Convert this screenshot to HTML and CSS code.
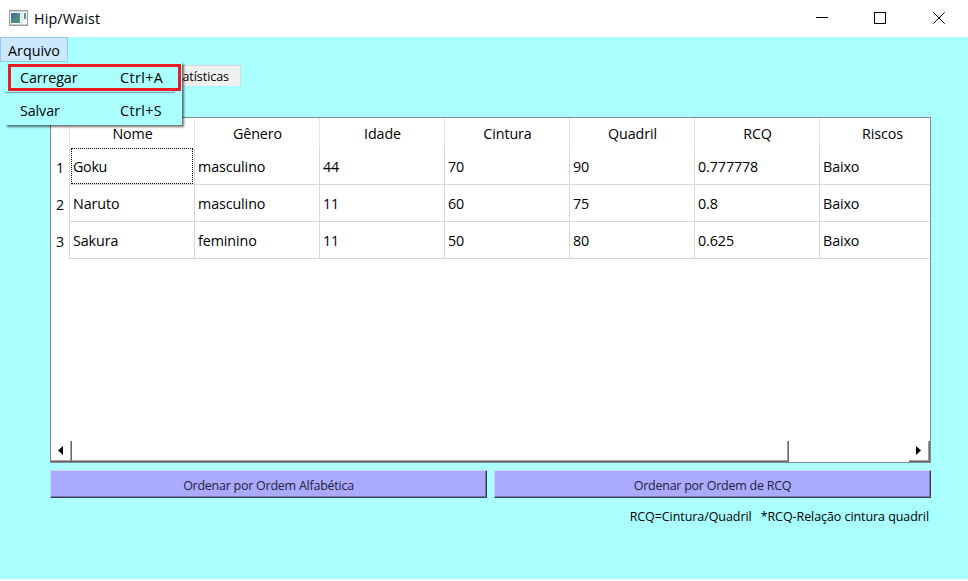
FILE: index.html
```html
<!DOCTYPE html>
<html lang="pt">
<head>
<meta charset="utf-8">
<title>Hip/Waist</title>
<link rel="stylesheet" href="styles.css">
</head>
<body>
<div class="window">
  <header class="titlebar">
    <svg class="app-icon" width="19" height="16" viewBox="0 0 19 16">
      <defs><linearGradient id="g" x1="0" y1="0" x2="1" y2="1"><stop offset="0" stop-color="#3c69a6"/><stop offset="1" stop-color="#4fa66d"/></linearGradient></defs>
      <rect x=".5" y=".5" width="18" height="15" fill="#f7f7f7" stroke="#989ca1"/>
      <rect x="1" y="1" width="17" height="1" fill="#d4d7da"/>
      <rect x="2" y="3" width="9" height="10" fill="url(#g)"/>
      <rect x="12" y="3" width="2" height="10" fill="#e4e4e4"/>
      <rect x="15" y="3" width="2" height="6" fill="#5b9a91"/>
      <rect x="1" y="14" width="17" height="1" fill="#ccc"/>
    </svg>
    <h1 class="title">Hip/Waist</h1>
    <svg class="controls" width="130" height="14" viewBox="0 0 130 14" fill="none" stroke="#000">
      <path d="M0 6.500h12M58.500 1.500h11v11h-11z" shape-rendering="crispEdges"/>
      <path d="M117.300 1.300l11.400 11.400M128.700 1.300l-11.400 11.400"/>
    </svg>
  </header>
  <nav class="menubar"><span class="menu-title">Arquivo</span>
    <div class="menu">
      <div class="item active"><span>Carregar</span><span class="shortcut">Ctrl+A</span></div>
      <div class="separator"></div>
      <div class="item"><span>Salvar</span><span class="shortcut">Ctrl+S</span></div>
    </div>
  </nav>
  <main class="content">
    <div class="tabs"><span class="tab">Estatísticas</span></div>
    <section class="table-frame">
      <div class="table-view">
        <table>
          <colgroup><col class="num"><col><col><col><col><col><col><col></colgroup>
          <thead><tr><th></th><th>Nome</th><th>Gênero</th><th>Idade</th><th>Cintura</th><th>Quadril</th><th>RCQ</th><th>Riscos</th></tr></thead>
          <tbody>
            <tr><th>1</th><td class="focus">Goku</td><td>masculino</td><td>44</td><td>70</td><td>90</td><td>0.777778</td><td>Baixo</td></tr>
            <tr><th>2</th><td>Naruto</td><td>masculino</td><td>11</td><td>60</td><td>75</td><td>0.8</td><td>Baixo</td></tr>
            <tr><th>3</th><td>Sakura</td><td>feminino</td><td>11</td><td>50</td><td>80</td><td>0.625</td><td>Baixo</td></tr>
          </tbody>
        </table>
      </div>
      <div class="scrollbar">
        <div class="arrow"><svg width="5" height="9"><path d="M5 0v9L0 4.500z"/></svg></div>
        <div class="thumb"></div>
        <div class="track"></div>
        <div class="arrow"><svg width="5" height="9"><path d="M0 0v9L5 4.500z"/></svg></div>
      </div>
    </section>
    <div class="actions"><button>Ordenar por Ordem Alfabética</button><button>Ordenar por Ordem de RCQ</button></div>
    <footer class="legend"><span>RCQ=Cintura/Quadril</span><span>*RCQ-Relação cintura quadril</span></footer>
  </main>
</div>
</body>
</html>
```
FILE: styles.css
```css
* { box-sizing: border-box; }
body {
  margin: 0;
  height: 581px;
  overflow: hidden;
  background: #fff;
  color: #000;
  font: 14.3px/20px "Open Sans", "Noto Sans", sans-serif;
  letter-spacing: -0.1px;
}
.window { width: 968px; height: 579px; background: #aaffff; }
.titlebar {
  display: flex;
  align-items: center;
  height: 37px;
  padding: 0 22px 0 9px;
  background: #fff;
}
.app-icon { margin-right: 6px; margin-bottom: 1px; }
.title { margin: 0; font-size: inherit; font-weight: 400; letter-spacing: 0.15px; }
.controls { margin-left: auto; margin-bottom: 1px; }
.menubar { position: relative; height: 25px; }
.menu-title {
  display: block;
  width: 68px;
  height: 25px;
  padding: 3px 0 0 7px;
  background: #cce8ff;
  border: 1px solid #90c8f6;
  letter-spacing: 0;
}
.menu {
  position: absolute;
  z-index: 2;
  left: 5px;
  top: 25px;
  width: 177px;
  height: 63px;
  padding-top: 2px;
  background: #aaffff;
  box-shadow: 2px 2px 2px rgba(0, 0, 0, .55);
}
.item {
  display: grid;
  grid-template-columns: 100px 1fr;
  height: 27px;
  padding: 4px 0 0 15px;
}
.item.active {
  width: 173px;
  margin-left: 3px;
  padding: 1px 0 0 9px;
  border: 3px solid #ed1c24;
}
.shortcut { letter-spacing: 0.4px; }
.separator { width: 170px; height: 1px; margin: 1px 0 4px; background: #70a5a5; }
.content { padding: 3px 37px 0 50px; }
.tabs { height: 52px; }
.tab {
  display: block;
  width: 85px;
  height: 21px;
  margin-left: 106px;
  padding: 1px 11px 0 0;
  border: 1px solid #d9d9d9;
  border-bottom: 0;
  background: #f0f0f0;
  font-size: 12.5px;
  letter-spacing: -0.05px;
  text-align: right;
}
.table-frame {
  display: flex;
  flex-direction: column;
  height: 346px;
  background: #fff;
  border: 1px solid #828790;
}
.table-view { flex: 1; overflow: hidden; }
table { width: 894px; table-layout: fixed; border-collapse: separate; border-spacing: 0; }
col { width: 125px; }
.num { width: 19px; }
th, td { padding: 1px 0 0; border-right: 1px solid #d8d8d8; font-weight: 400; }
thead th { height: 30px; padding-left: 1px; border-right-color: #e5e5e5; }
tbody th { height: 37px; padding: 2px 0 0; }
td { height: 37px; padding-left: 3px; border-bottom: 1px solid #d8d8d8; text-align: left; }
.focus { position: relative; letter-spacing: -0.3px; }
.focus::after {
  content: "";
  position: absolute;
  inset: 0 1px 0;
  border: 1px dotted #000;
}
.scrollbar { display: flex; height: 21px; }
.arrow, .thumb { border: solid #696969; border-width: 0 1px 1px 0; box-shadow: inset -1px -1px #a0a0a0; }
.arrow { display: flex; align-items: center; justify-content: center; width: 21px; padding: 0 1px 1px 0; }
.thumb { width: 717px; }
.track { flex: 1; }
.actions { display: grid; grid-template-columns: 1fr 1fr; gap: 7px; margin-top: 7px; }
button {
  height: 28px;
  padding: 4px 0 0;
  border: solid;
  border-width: 1px;
  border-color: #d0d0ff #3c3c60 #3c3c60 #d0d0ff;
  box-shadow: inset -1px -1px #7878b0;
  background: #aaaaff;
  color: #222238;
  font: 12.5px/20px "Open Sans", "Noto Sans", sans-serif;
  letter-spacing: -0.25px;
}
.legend { display: flex; justify-content: flex-end; gap: 9px; padding: 9px 2px 0 0; font-size: 12.5px; letter-spacing: -0.07px; }
```
